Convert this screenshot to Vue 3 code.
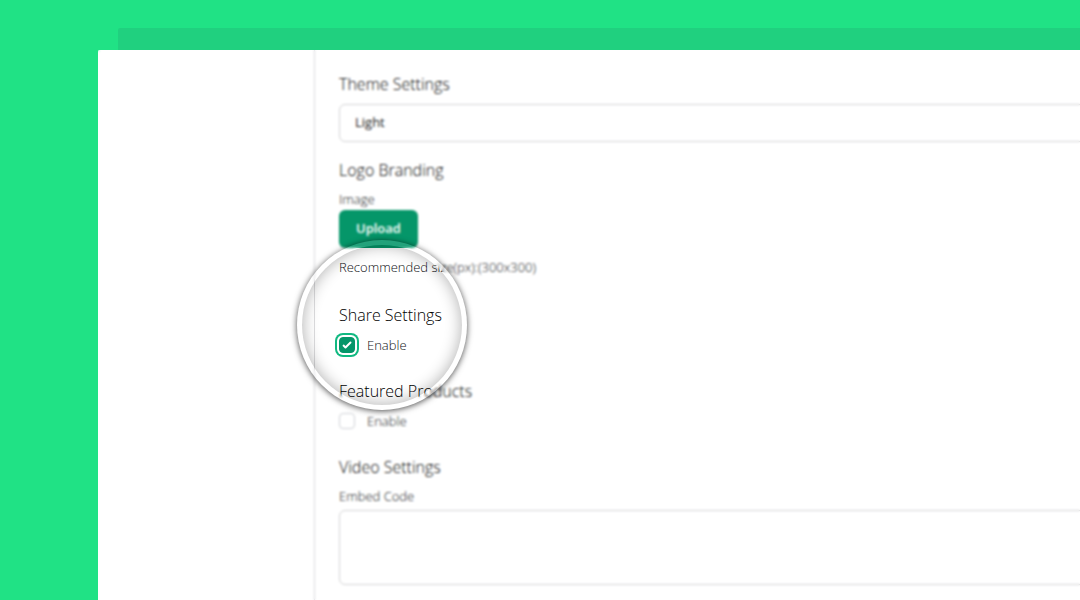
<script setup>
import { ref } from 'vue'

const theme = ref('Light')
const share = ref(true)
const featured = ref(false)
const embed = ref('')
</script>

<template>
  <div class="page">
    <div class="back-card"></div>
    <main class="panel">
      <aside class="sidebar"></aside>
      <form class="settings" @submit.prevent>
        <section class="group">
          <h2><label for="theme">Theme Settings</label></h2>
          <select id="theme" v-model="theme" class="field">
            <option>Light</option>
            <option>Dark</option>
          </select>
        </section>

        <section class="group">
          <h2>Logo Branding</h2>
          <span class="caption">Image</span>
          <button type="button" class="upload">Upload</button>
          <p class="hint">Recommended size(px):(300x300)</p>
        </section>

        <section class="group">
          <h2>Share Settings</h2>
          <label class="check"><input v-model="share" type="checkbox" class="focused" />Enable</label>
        </section>

        <section class="group">
          <h2>Featured Products</h2>
          <label class="check"><input v-model="featured" type="checkbox" />Enable</label>
        </section>

        <section class="group">
          <h2>Video Settings</h2>
          <label class="caption" for="embed">Embed Code</label>
          <textarea id="embed" v-model="embed" class="code"></textarea>
        </section>
      </form>
      <div class="haze"></div>
      <div class="lens"></div>
    </main>
  </div>
</template>

<style>
body {
  background: #20e285;
}
</style>

<style scoped>
* {
  box-sizing: border-box;
}
.page {
  display: flex;
  flex-direction: column;
  height: 100vh;
  padding-top: 28px;
  overflow: hidden;
  background: #20e285;
  font-family: "Open Sans", "Noto Sans", sans-serif;
}
.back-card {
  flex: none;
  height: 22px;
  margin-left: 118px;
  border-top-left-radius: 2px;
  background: #20d07f;
}
.panel {
  position: relative;
  display: flex;
  flex: 1;
  margin: 0 -40px 0 98px;
  border-top-left-radius: 2px;
  background: #fff;
}
.sidebar {
  flex: none;
  width: 217px;
  border-right: 1px solid #dcdcde;
}
.settings {
  flex: 1;
  padding: 22px 24px 0;
}
.group {
  display: flex;
  flex-direction: column;
  align-items: flex-start;
  margin-bottom: 24px;
}
.group:first-child {
  margin-bottom: 16px;
}
h2 {
  margin: 0 0 8px;
  font-size: 16px;
  font-weight: 300;
  line-height: 24px;
  color: #000;
}
.field,
.code {
  width: 100%;
  border: 1px solid #d4d4d6;
  border-radius: 6px;
  background: #fff;
  font: inherit;
  font-size: 13px;
  color: #222;
  outline: none;
}
.field {
  height: 38px;
  padding: 0 15px 2px;
  appearance: none;
}
.code {
  height: 75px;
  margin-top: 4px;
  padding: 8px 16px;
  resize: none;
}
.caption,
.check,
.hint {
  font-size: 13px;
  font-weight: 300;
  line-height: 20px;
  color: #101216;
}
.caption {
  margin-top: -1px;
}
.upload {
  height: 38px;
  margin-top: 1px;
  padding: 0 17px 2px;
  border: 0;
  border-radius: 6px;
  background: #059669;
  font: inherit;
  font-size: 13px;
  font-weight: 600;
  color: #fff;
}
.hint {
  margin: 9px 0 2px;
}
.check {
  display: flex;
  align-items: center;
  gap: 12px;
}
.check input {
  width: 16px;
  height: 16px;
  margin: 0;
  border: 1px solid #d1d3d8;
  border-radius: 4px;
  background: #fff;
  appearance: none;
}
.check input:checked {
  border-color: #059669;
  background: #059669 url("data:image/svg+xml,%3Csvg viewBox='0 0 16 16' fill='white' xmlns='http://www.w3.org/2000/svg'%3E%3Cpath d='M12.2 4.8a1 1 0 0 1 0 1.4l-5 5a1 1 0 0 1-1.4 0l-2-2a1 1 0 0 1 1.4-1.4l1.3 1.3 4.3-4.3a1 1 0 0 1 1.4 0z'/%3E%3C/svg%3E") center / 16px;
}
.check input.focused {
  box-shadow: 0 0 0 2px #fff, 0 0 0 4px #10b981;
}
.haze {
  position: absolute;
  inset: 0;
  backdrop-filter: blur(1px);
  mask-image: radial-gradient(circle at 284px 275px, transparent 80px, #000 82px);
  pointer-events: none;
}
.lens {
  position: absolute;
  top: 190px;
  left: 199px;
  width: 170px;
  height: 170px;
  border: 5px solid rgba(255, 255, 255, 0.12);
  border-radius: 50%;
  box-shadow: 0 1px 6px rgba(0, 0, 0, 0.7), inset 0 0 16px rgba(0, 0, 0, 0.32);
  pointer-events: none;
}
</style>
